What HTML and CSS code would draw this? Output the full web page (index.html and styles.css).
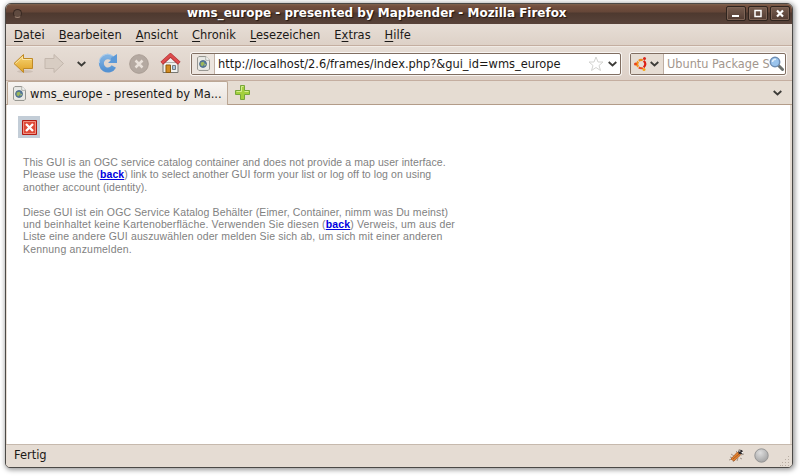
FILE: index.html
```html
<!DOCTYPE html>
<html lang="de">
<head>
<meta charset="utf-8">
<title>wms_europe - presented by Mapbender</title>
<link rel="stylesheet" href="styles.css">
</head>
<body>
<svg class="defs" width="0" height="0">
  <defs>
    <linearGradient id="gold" x1="0" y1="0" x2="0" y2="1"><stop offset="0" stop-color="#f8d778"/><stop offset="1" stop-color="#dfa023"/></linearGradient>
    <linearGradient id="blue" x1="0" y1="0" x2="0" y2="1"><stop offset="0" stop-color="#80b2e2"/><stop offset="1" stop-color="#5592d2"/></linearGradient>
    <radialGradient id="ball" cx=".4" cy=".3" r=".7"><stop offset="0" stop-color="#dedede"/><stop offset="1" stop-color="#a5a5a5"/></radialGradient>
    <symbol id="page" viewBox="0 0 14 16">
      <path d="M.5 2 2 .5h7.5l4 4V14L12 15.500H2L.5 14Z" fill="#e9e9e5" stroke="#8c8d87"/>
      <path d="M9.500.5v4h4" fill="#fff" stroke="#a3a49e"/>
      <circle cx="6.500" cy="8.500" r="3.700" fill="#55799e" stroke="#4b6b87"/>
      <path d="m4 7 3-1 1 2-2 3-2-1z" fill="#9cb859"/><path d="m8 8 2 1-2 2z" fill="#adc777"/>
    </symbol>
    <symbol id="chev" viewBox="0 0 9 6"><path d="m.7 1 3.800 3.500L8.300 1" fill="none" stroke="#3c3b37" stroke-width="1.800"/></symbol>
  </defs>
</svg>
<div class="window">
  <header class="titlebar">
    <span class="dot"></span>
    <h1 class="title">wms_europe - presented by Mapbender - Mozilla Firefox</h1>
    <div class="controls">
      <span class="ctl"><svg width="18" height="13"><path d="M5 9h7" stroke="#fff" stroke-width="2"/></svg></span>
      <span class="ctl"><svg width="18" height="13"><path d="M6 3.500h6v6H6z" fill="none" stroke="#fff" stroke-width="1.500"/></svg></span>
      <span class="ctl"><svg width="18" height="13"><path d="m6 3.500 6 6m0-6-6 6" stroke="#fff" stroke-width="2.200"/></svg></span>
    </div>
  </header>
  <nav class="menu">
    <span><u>D</u>atei</span><span><u>B</u>earbeiten</span><span><u>A</u>nsicht</span><span><u>C</u>hronik</span><span><u>L</u>esezeichen</span><span>E<u>x</u>tras</span><span><u>H</u>ilfe</span>
  </nav>
  <div class="toolbar">
    <svg class="back" width="22" height="22" viewBox="0 0 22 22"><ellipse cx="12" cy="18.500" rx="8" ry="1.500" fill="#c3b7ad" opacity=".7"/><path d="M1 10.500 10.500 1.500v4h9v10h-9v4z" fill="url(#gold)" stroke="#c08a26"/><path d="m2.500 10.500 7-6.500v2.500h9" fill="none" stroke="#fbe6a7"/></svg>
    <svg class="fwd" width="21" height="22" viewBox="0 0 21 22"><path d="M19.500 10.500 10 1.500v4H1v10h9v4z" fill="#d8cdc3" stroke="#c3b7ad"/></svg>
    <svg class="hist" width="9" height="6"><use href="#chev"/></svg>
    <svg class="reload" width="20" height="21" viewBox="0 0 20 21"><path d="M15.800 13.500A6.600 6.600 0 1 1 14 5.200" fill="none" stroke="url(#blue)" stroke-width="5"/><path d="M19 1v9h-9l3-3V5z" fill="#5c99d8"/><path d="M1.500 10A8 8 0 0 1 14 2.500" fill="none" stroke="#a5c9eb"/></svg>
    <svg class="stop" width="20" height="20" viewBox="0 0 20 20"><circle cx="10" cy="10" r="9.300" fill="#b4a9a1" stroke="#a99d94"/><path d="m6.500 6.500 7 7m0-7-7 7" stroke="#e9e1da" stroke-width="2.500"/></svg>
    <svg class="home" width="21" height="21" viewBox="0 0 21 21"><path d="M3 9.500h15v10H3z" fill="#f0f0ee" stroke="#767671"/><path d="M6 12h4.500v7.500H6z" fill="#d28b20" stroke="#8f5b0d"/><path d="M12.500 12.500h3v4h-3z" fill="#aac7df" stroke="#747b80"/><path d="M3 9.500 10.500 3 18 9.500z" fill="#eee"/><path d="m1.800 10.200 8.700-7.900 8.700 7.900" fill="none" stroke="#a93238" stroke-width="4"/><path d="m1.800 10 8.700-7.900 8.700 7.900" fill="none" stroke="#dd4c4c" stroke-width="2.600"/></svg>
    <div class="field url">
      <span class="site"><svg width="13" height="15"><use href="#page"/></svg></span>
      <span class="address">http://localhost/2.6/frames/index.php?&amp;gui_id=wms_europe</span>
      <svg class="star" width="16" height="16" viewBox="0 0 16 16"><path d="m8 1 2 5h5l-4 3.500 1.500 5L8 11.500l-4.500 3 1.500-5L1 6h5z" fill="#fff" stroke="#d3d3d0"/></svg>
      <svg class="drop" width="9" height="6"><use href="#chev"/></svg>
    </div>
    <div class="field search">
      <span class="engine">
        <svg width="14" height="14" viewBox="0 0 14 14"><g fill="none" stroke-width="2.200"><path d="M4.800 3.800A4 4 0 0 1 8.800 3.300" stroke="#f08a1c"/><path d="M9.600 3.800A4 4 0 0 1 9.600 10.400" stroke="#dd1f14"/><path d="M8.800 10.900A4 4 0 0 1 4.800 10.400" stroke="#ed4a1c"/><path d="M4.200 9.700A4 4 0 0 1 4.200 4.400" stroke="#f6921c"/></g><circle cx="1.500" cy="7" r="1.500" fill="#e9461b"/><circle cx="10.500" cy="1.600" r="1.500" fill="#d8291e"/><circle cx="10" cy="12.500" r="1.500" fill="#f6a414"/></svg>
        <svg width="9" height="6"><use href="#chev"/></svg>
      </span>
      <span class="hint">Ubuntu Package S</span>
      <svg class="lens" width="15" height="15" viewBox="0 0 15 15"><path d="m9 9 4.500 4.500" stroke="#6c716e" stroke-width="3" stroke-linecap="round"/><circle cx="6" cy="6" r="4.700" fill="#9ac4ed" stroke="#6d8db3" stroke-width="1.500"/><path d="M3.500 6A2.600 2.600 0 0 1 7 3.500" fill="none" stroke="#e3f1fc" stroke-width="1.500"/></svg>
    </div>
  </div>
  <div class="tabs">
    <div class="tab"><svg width="13" height="15"><use href="#page"/></svg><span>wms_europe - presented by Ma...</span></div>
    <svg class="plus" width="15" height="15" viewBox="0 0 15 15"><path d="M5.500.5h4v5h5v4h-5v5h-4v-5h-5v-4h5z" fill="#a3d03d" stroke="#76a63a"/><path d="M6.500 1.500h2m-2 0v5h-5m8 0h4" fill="none" stroke="#d4ec8f"/></svg>
    <svg class="all" width="9" height="6"><use href="#chev"/></svg>
  </div>
  <main class="content">
    <span class="logoff"><svg width="15" height="15" viewBox="0 0 15 15"><path d="M.5.5h14v14H.5z" fill="#df4b39" stroke="#b31b13"/><path d="M1.500 1.500h12v12h-12z" fill="none" stroke="#f09182"/><path d="m4 4 7 7m0-7-7 7" stroke="#fff" stroke-width="2.300"/></svg></span>
    <p><span class="l1">This GUI is an OGC service catalog container and does not provide a map user interface.</span><br><span class="l2">Please use the (<a href="#">back</a>) link to select another GUI form your list or log off to log on using</span><br><span class="l3">another account (identity).</span></p>
    <p><span class="l4">Diese GUI ist ein OGC Service Katalog Behälter (Eimer, Container, nimm was Du meinst)</span><br><span class="l5">und beinhaltet keine Kartenoberfläche. Verwenden Sie diesen (<a href="#">back</a>) Verweis, um aus der</span><br><span class="l6">Liste eine andere GUI auszuwählen oder melden Sie sich ab, um sich mit einer anderen</span><br><span class="l7">Kennung anzumelden.</span></p>
  </main>
  <footer class="status">
    <span class="state">Fertig</span>
    <svg class="bug" width="15" height="15" viewBox="0 0 15 15"><path d="m2 6 3 2M1 9l3 1m0 4 2-3m2 2 1-3m2 0 2 1M7 3l2 2m1-4 1 2m1 4 3-1M0 12l3-1" stroke="#a3968b"/><path d="M2 11 8.500 4l3 3L5 13z" fill="#e8812b" stroke="#b5682f"/><path d="m4 11 6-5" stroke="#a3602b"/><circle cx="11.500" cy="4" r="2.300" fill="#2b292b"/><path d="M10 3h1.500m1 1.500H14" stroke="#fff"/></svg>
    <svg class="orb" width="15" height="15"><circle cx="7.500" cy="7.500" r="6.700" fill="url(#ball)" stroke="#969696"/></svg>
    <svg class="grip" width="10" height="10"><g fill="#b9aea3"><path d="M8 0h1v1H8zM5 3h1v1H5zM8 3h1v1H8zM2 6h1v1H2zM5 6h1v1H5zM8 6h1v1H8zM0 9h1v1H0zM2 9h1v1H2zM5 9h1v1H5zM8 9h1v1H8z"/></g></svg>
  </footer>
</div>
</body>
</html>
```
FILE: styles.css
```css
* { box-sizing: border-box; }
body { margin: 0; height: 476px; padding: 3px 0 0 5px; overflow: hidden; background: #fff; font: 12.75px/16px "DejaVu Sans Condensed", "DejaVu Sans", sans-serif; color: #1b1917; }
.defs { position: absolute; }
svg { display: block; flex: none; }
.window { width: 788px; height: 465px; display: flex; flex-direction: column; border: 1px solid #4b4946; border-radius: 6px 6px 5px 5px; background: #e5dcd3; box-shadow: 1px 1px 5px 1px #9b9b9b; overflow: hidden; white-space: nowrap; }
.titlebar { height: 20px; flex: none; display: flex; align-items: center; background: linear-gradient(#80634f 0, #74503f 2px, #654638 8px, #4e392f 9px, #58433a 100%); padding: 0 2px 0 7px; }
.dot { width: 9px; height: 9px; flex: none; margin-bottom: 2px; border: 1px solid #382821; border-bottom-color: #9a8171; border-radius: 50%; background: #604b40; }
.title { margin: 0 0 2px; flex: 1; padding-left: 165px; color: #fff; font-family: "DejaVu Sans", sans-serif; font-size: 11.97px; line-height: 16px; text-shadow: 1px 1px 1px #21150f; }
.controls { display: flex; gap: 2px; margin-bottom: 1px; }
.ctl { width: 20px; height: 15px; border: 1px solid #2f241e; border-radius: 2px; background: linear-gradient(#785e50, #513b31); box-shadow: inset 0 0 0 1px #7d6355; }
.menu { height: 22px; flex: none; display: flex; gap: 14px; padding: 3px 8px 0; background: linear-gradient(#e7ded6, #ddd1c7); border-bottom: 1px solid #c4aea0; }
.menu u { text-decoration-thickness: 1px; text-underline-offset: 2px; }
.toolbar { height: 35px; flex: none; display: flex; align-items: center; border-top: 1px solid #f1ebe5; border-bottom: 1px solid #c4aea0; padding-left: 7px; background: linear-gradient(#e6ddd5, #ddd0c7); }
.fwd { margin-left: 9px; }
.hist { margin-left: 12px; }
.reload { margin-left: 12px; }
.stop { margin-left: 11px; }
.home { margin-left: 11px; }
.field { height: 22px; display: flex; align-items: center; border: 1px solid #806e62; border-radius: 2px; background: #fff; box-shadow: 0 0 0 1px #f8f5f2; }
.url { width: 430px; margin-left: 10px; }
.site { width: 23px; height: 20px; flex: none; display: flex; align-items: center; justify-content: center; background: #ece5df; border-right: 1px solid #c2b1a5; }
.address { padding-left: 3px; font-size: 12.7px; }
.star { margin-left: auto; }
.drop { margin: 0 3px 0 4px; }
.search { width: 156px; margin-left: 9px; }
.engine { width: 33px; height: 20px; flex: none; display: flex; align-items: center; gap: 2px; padding-left: 3px; background: #e6ddd4; border-right: 1px solid #bdaea3; }
.hint { width: 105px; padding-left: 3px; font-size: 12.6px; color: #a2968d; }
.tabs { height: 24px; flex: none; display: flex; align-items: center; background: #e5dcd2; border-bottom: 1px solid #b39c89; padding-left: 1px; }
.tab { width: 221px; height: 24px; flex: none; display: flex; align-items: center; gap: 4px; padding-left: 5px; border: solid #bba795; border-width: 1px 1px 0; border-radius: 2px 2px 0 0; background: linear-gradient(#f7f4f1, #e9e2db); margin-bottom: -1px; }
.tab span { font-size: 12.8px; }
.plus { margin-left: 7px; }
.all { margin: 0 10px 0 auto; }
.content { flex: 1; margin: 0 2px 0 1px; background: #fff; padding: 11px 0 0 11px; font: 10.5px/12.4px "Liberation Sans", Arial, sans-serif; color: #818181; }
.logoff { display: flex; width: 22px; height: 22px; align-items: center; justify-content: center; background: #c3cdd7; }
p { margin: 18px 0 0 5px; }
p + p { margin-top: 12.4px; }
.l1 { letter-spacing: .09px; }
.l2 { letter-spacing: .07px; }
.l3 { letter-spacing: .11px; }
.l4 { letter-spacing: .12px; }
.l5 { letter-spacing: .15px; }
.l6 { letter-spacing: .13px; }
.l7 { letter-spacing: .2px; }
a { color: #0000e0; font-weight: bold; }
.status { height: 23px; flex: none; display: flex; align-items: center; padding: 0 2px 1px 8px; border-top: 1px solid #c6b9ad; background: #e5dcd3; }
.state { margin-top: -2px; }
.orb { margin: 0 11px 0 10px; }
.bug { margin-left: auto; }
.grip { align-self: flex-end; }
```
